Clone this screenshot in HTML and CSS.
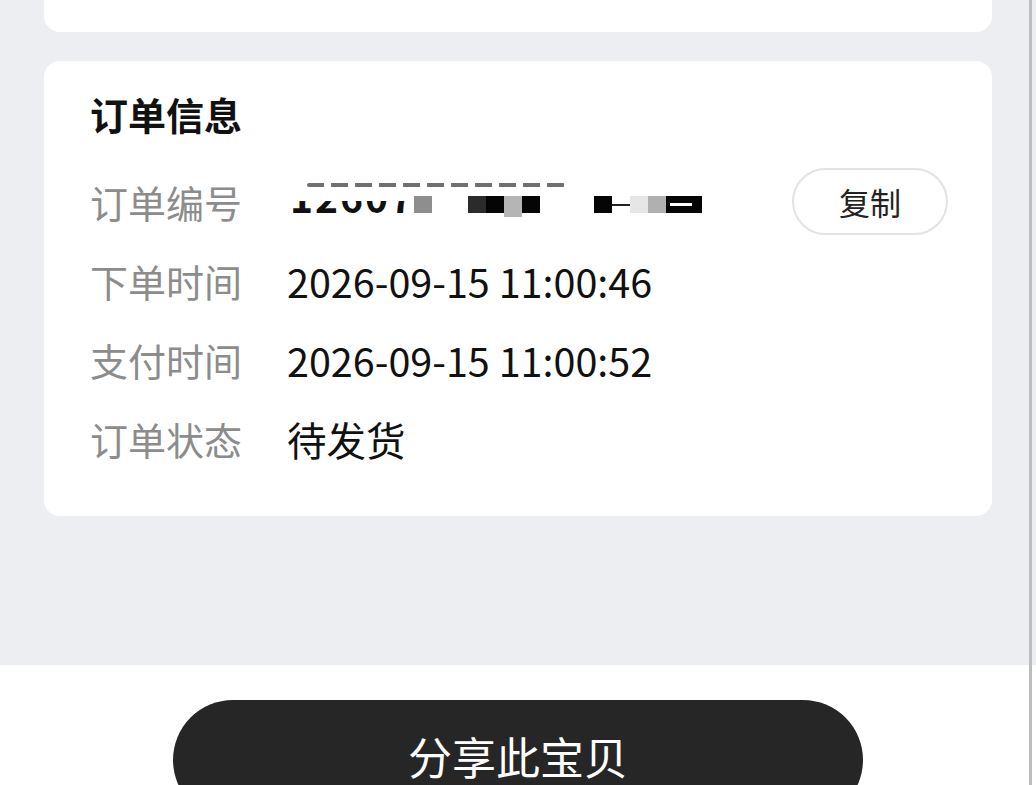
FILE: index.html
```html
<!DOCTYPE html>
<html lang="zh-CN">
<head>
<meta charset="utf-8">
<link rel="stylesheet" href="styles.css">
</head>
<body>
<div class="page">
  <main class="content">
    <div class="card card-top"></div>
    <section class="card card-info">
      <h2 class="card-title">订单信息</h2>
      <div class="row">
        <span class="label">订单编号</span>
        <div class="value redacted">
          <span class="dash-line"></span>
          <span class="digits-clip"><span class="digits">1260774</span></span>
          <span class="blk b-gray" style="left:127px"></span>
          <span class="blk b-dark" style="left:181px"></span>
          <span class="blk b-black" style="left:199px"></span>
          <span class="blk b-light tall" style="left:217px"></span>
          <span class="blk b-black" style="left:235px"></span>
          <span class="blk b-black" style="left:307px"></span>
          <span class="thin" style="left:325px"></span>
          <span class="blk b-pale" style="left:343px"></span>
          <span class="blk b-mid" style="left:361px"></span>
          <span class="blk b-black wide" style="left:379px"><i class="gap"></i></span>
        </div>
        <button class="copy-btn">复制</button>
      </div>
      <div class="row">
        <span class="label">下单时间</span>
        <span class="value">2026-09-15 11:00:46</span>
      </div>
      <div class="row">
        <span class="label">支付时间</span>
        <span class="value">2026-09-15 11:00:52</span>
      </div>
      <div class="row">
        <span class="label">订单状态</span>
        <span class="value">待发货</span>
      </div>
    </section>
  </main>
  <footer class="footer">
    <button class="share-btn">分享此宝贝</button>
  </footer>
  <div class="scrollbar"></div>
</div>
</body>
</html>
```

FILE: styles.css
```css
* { box-sizing: border-box; }
html, body {
  margin: 0;
  padding: 0;
  width: 1036px;
  height: 785px;
  overflow: hidden;
  background: #edeef2;
  font-family: "Noto Sans CJK SC", "Noto Sans", sans-serif;
}
.page {
  position: relative;
  width: 1036px;
  height: 785px;
  display: flex;
  flex-direction: column;
}
.content {
  flex: none;
  height: 665px;
  padding: 0 44px;
  display: flex;
  flex-direction: column;
  gap: 29px;
}
.card {
  background: #ffffff;
  width: 948px;
  flex: none;
}
.card-top {
  height: 32px;
  border-radius: 0 0 16px 16px;
}
.card-info {
  height: 455px;
  border-radius: 16px;
  padding: 26px 44px 0 46px;
}
.card-title {
  margin: 0 0 21px;
  font-size: 38px;
  font-weight: 700;
  line-height: 54px;
  color: #111;
}
.row {
  display: flex;
  align-items: center;
  height: 79px;
}
.label {
  width: 197px;
  flex: none;
  font-size: 38px;
  color: #8c8c8c;
}
.value {
  font-size: 39.5px;
  color: #111;
}
.redacted {
  position: relative;
  width: 440px;
  height: 50px;
}
.dash-line {
  position: absolute;
  left: 20px;
  top: 6px;
  width: 258px;
  height: 4px;
  background: repeating-linear-gradient(90deg, #333 0 17px, transparent 17px 24px);
  opacity: 0.7;
  border-radius: 2px;
}
.digits-clip {
  position: absolute;
  left: 3px;
  top: 24px;
  height: 13px;
  width: 124px;
  overflow: hidden;
}
.digits {
  display: block;
  margin-top: -25px;
  font-size: 39px;
  line-height: 40px;
  font-weight: 700;
  letter-spacing: 2px;
}
.blk {
  position: absolute;
  top: 19px;
  width: 18px;
  height: 17px;
}
.blk.tall { height: 21px; }
.blk.wide { width: 36px; }
.b-gray { background: #8e8e8e; }
.b-dark { background: #2b2b2b; }
.b-black { background: #050505; }
.b-light { background: #b5b5b5; }
.b-pale { background: #e6e6e6; }
.b-mid { background: #b0b0b0; }
.thin {
  position: absolute;
  top: 27px;
  width: 18px;
  height: 2px;
  background: #222;
}
.gap {
  position: absolute;
  left: 4px;
  top: 7px;
  width: 22px;
  height: 3px;
  background: #fff;
}
.copy-btn {
  margin-left: auto;
  width: 156px;
  height: 67px;
  border: 2px solid #e3e3e3;
  border-radius: 34px;
  background: #fff;
  font-family: inherit;
  font-size: 31px;
  color: #222;
  padding: 0;
}
.footer {
  flex: 1;
  background: #ffffff;
  display: flex;
  justify-content: center;
  padding-top: 35px;
}
.share-btn {
  flex: none;
  width: 690px;
  height: 120px;
  border: none;
  border-radius: 60px;
  background: #262626;
  color: #fff;
  font-family: inherit;
  font-size: 44px;
  padding: 0 0 8px;
  line-height: 1;
}
.scrollbar {
  position: absolute;
  top: 0;
  right: 4px;
  width: 3px;
  height: 785px;
  background: #bdbdbf;
}
```
